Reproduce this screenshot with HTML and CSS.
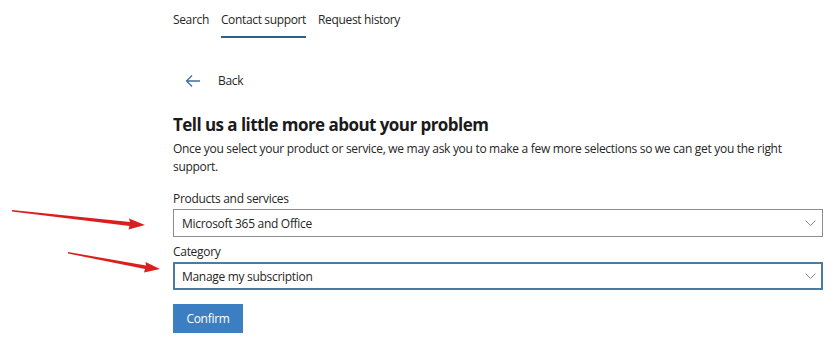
FILE: index.html
```html
<!DOCTYPE html>
<html lang="en">
  <head>
    <meta charset="UTF-8" />
    <meta name="viewport" content="width=device-width, initial-scale=1.0" />
    <title>Contact support</title>
    <link rel="stylesheet" href="styles.css">
  </head>
  <body>
    <div class="page">
      <nav class="tabs">
        <a href="#" class="tab">Search</a>
        <a href="#" class="tab active">Contact support</a>
        <a href="#" class="tab">Request history</a>
      </nav>

      <a href="#" class="back">
        <svg width="16" height="14" viewBox="0 0 16 14">
          <path d="M15 7H1.5M7 1.5L1.5 7 7 12.5" fill="none" stroke="#3f6f99" stroke-width="1.3" />
        </svg>
        <span>Back</span>
      </a>

      <h1>Tell us a little more about your problem</h1>
      <p class="intro">
        Once you select your product or service, we may ask you to make a few more selections so we can get you the right
        support.
      </p>

      <form class="support-form">
        <label class="field-label">Products and services</label>
        <div class="select">
          <span>Microsoft 365 and Office</span>
          <svg class="chevron" width="11" height="6" viewBox="0 0 11 6">
            <path d="M0.5 0.5L5.5 5.5 10.5 0.5" fill="none" stroke="#8a8a8a" stroke-width="1" />
          </svg>
        </div>

        <label class="field-label">Category</label>
        <div class="select focused">
          <span>Manage my subscription</span>
          <svg class="chevron" width="11" height="6" viewBox="0 0 11 6">
            <path d="M0.5 0.5L5.5 5.5 10.5 0.5" fill="none" stroke="#8a8a8a" stroke-width="1" />
          </svg>
        </div>

        <button type="submit" class="confirm-btn">Confirm</button>
      </form>
    </div>

    <!-- annotation arrows -->
    <svg class="arrows" width="170" height="90" viewBox="0 0 170 90">
      <path d="M12 14 L130 26 L129 22.5 L145 29 L128.5 33.5 L129.5 30 L12 15.5 Z" fill="#d9201f" />
      <path d="M68 56 L146 69.5 L145.5 66 L160 73 L144 76.5 L145 73 L68 57.5 Z" fill="#d9201f" />
    </svg>
  </body>
</html>
```

FILE: styles.css
```css
* {
  margin: 0;
  padding: 0;
  box-sizing: border-box;
}

body {
  font-family: "Open Sans", "Noto Sans", Arial, sans-serif;
  font-size: 12px;
  color: #262626;
  background-color: white;
}

a {
  color: inherit;
  text-decoration: none;
}

.page {
  width: 650px;
  margin-left: 173px;
}

.tabs {
  display: flex;
  gap: 12px;
  padding-top: 11px;
}

.tab {
  padding-bottom: 8px;
  letter-spacing: -0.35px;
  border-bottom: 2px solid transparent;
}

.tab.active {
  border-bottom-color: #2f5f88;
}

.back {
  display: flex;
  align-items: center;
  gap: 17px;
  margin-top: 34px;
  padding-left: 12px;
  letter-spacing: -0.3px;
}

h1 {
  margin-top: 24px;
  font-size: 17px;
  font-weight: 700;
  color: #1a1a1a;
  letter-spacing: -0.55px;
}

.intro {
  margin-top: 4px;
  line-height: 18px;
  letter-spacing: -0.3px;
}

.support-form {
  display: flex;
  flex-direction: column;
  margin-top: 15px;
}

.field-label {
  line-height: 16px;
  margin-bottom: 2px;
  letter-spacing: -0.3px;
}

.select {
  display: flex;
  align-items: center;
  justify-content: space-between;
  height: 28px;
  padding: 0 6px 0 8px;
  border: 1px solid #8d8d8d;
  margin-bottom: 7px;
  letter-spacing: -0.3px;
}

.select.focused {
  border-color: #4a7ca3;
  box-shadow: inset 0 0 0 1px #4a7ca3;
}

.confirm-btn {
  width: 70px;
  height: 29px;
  margin-top: 7px;
  border: none;
  background-color: #3b7fc2;
  color: white;
  font-family: inherit;
  font-size: 12px;
  letter-spacing: -0.3px;
  cursor: pointer;
}

.arrows {
  position: absolute;
  left: 0;
  top: 196px;
}
```
